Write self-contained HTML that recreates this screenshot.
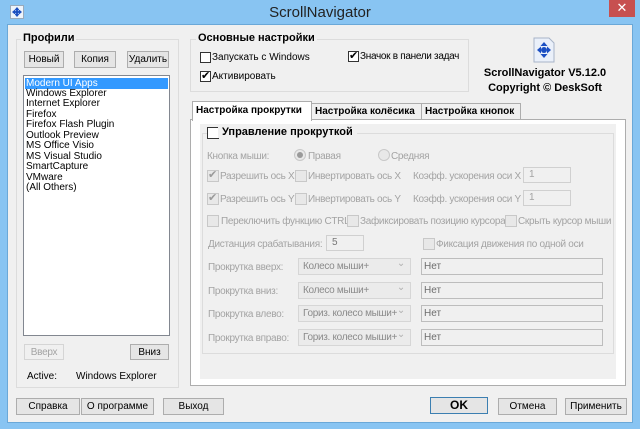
<!DOCTYPE html>
<html><head><meta charset="utf-8"><style>
*{box-sizing:border-box;margin:0;padding:0}
body{width:640px;height:429px;background:#88c4f2;font-family:"Liberation Sans","DejaVu Sans",sans-serif;font-size:10px;color:#000;position:relative;overflow:hidden}
div{white-space:nowrap}
.a{position:absolute}
#client{position:absolute;left:7px;top:24px;width:626px;height:399px;background:#f0f0f0;border:1px solid #6aa8d8}
.grp{position:absolute;border:1px solid #dcdcdc}
.gt{position:absolute;background:#f0f0f0;font-weight:bold;font-size:11px;padding:0 2px}
.btn{position:absolute;border:1px solid #adadad;background:#e5e5e5;text-align:center;font-size:10px;line-height:15px}
.cb{position:absolute;width:11px;height:11px;border:1px solid #333;background:#fff}
.dcb{position:absolute;width:12px;height:12px;border:1px solid #c8c8c8;background:#e8e8e8}
.dis{color:#a3a3a3;letter-spacing:-0.3px}
.inp{position:absolute;border:1px solid #d0d0d0;background:#f0f0f0;color:#a3a3a3;padding-left:5px;line-height:14px}
.cmb{position:absolute;border:1px solid #d6d6d6;background:#ebebeb;color:#8a8a8a;padding-left:4px;line-height:15px;font-size:10px;letter-spacing:-0.3px}
.cmb:after{content:"⌄";position:absolute;right:5px;top:-3px;color:#b0b0b0}
.net{position:absolute;border:1px solid #bdbdbd;background:#f0f0f0;color:#6d6d6d;padding-left:2px;line-height:15px}
.chk:after{content:"✔";position:absolute;left:0px;top:-3px;font-size:11px}
.tab{position:absolute;border:1px solid #adadad;background:#f0f0f0;font-weight:bold;font-size:10px;padding-left:3px;line-height:15px;overflow:hidden}
</style></head><body>
<div class="a" style="left:0;top:4px;width:640px;text-align:center;font-size:15px;color:#222">ScrollNavigator</div>
<svg class="a" style="left:10px;top:5px" width="14" height="14"><rect x="0.5" y="0.5" width="13" height="13" fill="#eef4fb" stroke="#9ab"/><path d="M7 2l2.5 3h-5zM7 12l2.5-3h-5zM2 7l3-2.5v5zM12 7l-3-2.5v5z" fill="#1a4fc0"/><circle cx="7" cy="7" r="2" fill="#1a4fc0"/></svg>
<div class="a" style="left:609px;top:0;width:26px;height:17px;background:#c75050;color:#fff;text-align:center;font-size:13px;line-height:16px">✕</div>
<div id="client"></div>

<div class="grp" style="left:16px;top:39px;width:163px;height:349px"></div>
<div class="gt" style="left:21px;top:32px">Профили</div>
<div class="btn" style="left:24px;top:51px;width:40px;height:17px">Новый</div>
<div class="btn" style="left:74px;top:51px;width:42px;height:17px">Копия</div>
<div class="btn" style="left:127px;top:51px;width:42px;height:17px">Удалить</div>
<div class="a" style="left:23px;top:75px;width:147px;height:261px;background:#fff;border:1px solid #828790"></div>
<div class="a" style="left:25px;top:78px;width:143px;height:10.5px;background:#3399ff"></div>
<div class="a" style="left:26px;top:78.5px;line-height:10.45px;font-size:10px">
<span style="color:#fff">Modern UI Apps</span><br>Windows Explorer<br>Internet Explorer<br>Firefox<br>Firefox Flash Plugin<br>Outlook Preview<br>MS Office Visio<br>MS Visual Studio<br>SmartCapture<br>VMware<br>(All Others)</div>
<div class="btn dis" style="left:24px;top:344px;width:40px;height:16px;background:#f0f0f0;border-color:#d5d5d5">Вверх</div>
<div class="btn" style="left:130px;top:344px;width:39px;height:16px">Вниз</div>
<div class="a" style="left:27px;top:371px">Active:</div>
<div class="a" style="left:76px;top:371px">Windows Explorer</div>

<div class="grp" style="left:190px;top:39px;width:279px;height:53px"></div>
<div class="gt" style="left:196px;top:32px">Основные настройки</div>
<div class="cb" style="left:200px;top:52px"></div><div class="a" style="left:212px;top:52px">Запускать с Windows</div>
<div class="cb chk" style="left:200px;top:71px"></div><div class="a" style="left:212px;top:71px">Активировать</div>
<div class="cb chk" style="left:348px;top:51px"></div><div class="a" style="left:360px;top:51px;letter-spacing:-0.3px">Значок в панели задач</div>

<svg class="a" style="left:533px;top:37px" width="22" height="26"><path d="M1 1h15l5 5v19H1z" fill="#eaf0fa" stroke="#a8b4c8"/><path d="M11 5l3.5 4h-7zM11 21l3.5-4h-7zM4 13l4-3.5v7zM18 13l-4-3.5v7z" fill="#1b4fc3"/><circle cx="11" cy="13" r="3" fill="#1b4fc3"/></svg>
<div class="a" style="left:470px;top:66px;width:150px;text-align:center;font-weight:bold;font-size:11px;line-height:15px">ScrollNavigator V5.12.0<br>Copyright © DeskSoft</div>

<div class="a" style="left:190px;top:119px;width:436px;height:267px;background:#fff;border:1px solid #adadad"></div>
<div class="tab" style="left:311px;top:103px;width:111px;height:17px">Настройка колёсика</div>
<div class="tab" style="left:421px;top:103px;width:100px;height:17px">Настройка кнопок</div>
<div class="tab" style="left:192px;top:101px;width:120px;height:20px;border-bottom:none;background:#fff;line-height:17px">Настройка прокрутки</div>
<div class="a" style="left:200px;top:124px;width:416px;height:255px;background:#f0f0f0"></div>
<div class="grp" style="left:202px;top:133px;width:412px;height:221px;border-color:#dcdcdc"></div>
<div class="cb" style="left:207px;top:127px;width:12px;height:12px"></div>
<div class="a" style="left:218px;top:126px;background:#f0f0f0;font-weight:bold;font-size:11px;padding:0 4px">Управление прокруткой</div>

<div class="a dis" style="left:207px;top:151px">Кнопка мыши:</div>
<div class="a" style="left:294px;top:149px;width:12px;height:12px;border-radius:50%;border:1px solid #c8c8c8;background:#e8e8e8"><div style="margin:2px;width:6px;height:6px;border-radius:50%;background:#9a9a9a"></div></div>
<div class="a dis" style="left:308px;top:151px">Правая</div>
<div class="a" style="left:378px;top:149px;width:12px;height:12px;border-radius:50%;border:1px solid #c8c8c8;background:#e8e8e8"></div>
<div class="a dis" style="left:391px;top:151px">Средняя</div>

<div class="dcb chk" style="left:207px;top:170px;color:#9a9a9a"></div><div class="a dis" style="left:220px;top:171px">Разрешить ось X</div>
<div class="dcb" style="left:295px;top:170px"></div><div class="a dis" style="left:308px;top:171px">Инвертировать ось X</div>
<div class="a dis" style="left:413px;top:171px">Коэфф. ускорения оси X</div>
<div class="inp" style="left:523px;top:167px;width:48px;height:16px">1</div>

<div class="dcb chk" style="left:207px;top:193px;color:#9a9a9a"></div><div class="a dis" style="left:220px;top:194px">Разрешить ось Y</div>
<div class="dcb" style="left:295px;top:193px"></div><div class="a dis" style="left:308px;top:194px">Инвертировать ось Y</div>
<div class="a dis" style="left:413px;top:194px">Коэфф. ускорения оси Y</div>
<div class="inp" style="left:523px;top:190px;width:48px;height:16px">1</div>

<div class="dcb" style="left:207px;top:215px"></div><div class="a dis" style="left:221px;top:216px">Переключить функцию CTRL</div>
<div class="dcb" style="left:347px;top:215px"></div><div class="a dis" style="left:360px;top:216px">Зафиксировать позицию курсора</div>
<div class="dcb" style="left:505px;top:215px"></div><div class="a dis" style="left:518px;top:216px">Скрыть курсор мыши</div>

<div class="a dis" style="left:208px;top:239px">Дистанция срабатывания:</div>
<div class="inp" style="left:326px;top:235px;width:38px;height:16px;color:#777">5</div>
<div class="dcb" style="left:423px;top:238px"></div><div class="a dis" style="left:436px;top:239px">Фиксация движения по одной оси</div>

<div class="a dis" style="left:208px;top:262px">Прокрутка вверх:</div>
<div class="cmb" style="left:298px;top:258px;width:113px;height:17px">Колесо мыши+</div>
<div class="net" style="left:421px;top:258px;width:182px;height:17px">Нет</div>
<div class="a dis" style="left:208px;top:286px">Прокрутка вниз:</div>
<div class="cmb" style="left:298px;top:282px;width:113px;height:17px">Колесо мыши+</div>
<div class="net" style="left:421px;top:282px;width:182px;height:17px">Нет</div>
<div class="a dis" style="left:208px;top:309px">Прокрутка влево:</div>
<div class="cmb" style="left:298px;top:305px;width:113px;height:17px">Гориз. колесо мыши+</div>
<div class="net" style="left:421px;top:305px;width:182px;height:17px">Нет</div>
<div class="a dis" style="left:208px;top:333px">Прокрутка вправо:</div>
<div class="cmb" style="left:298px;top:329px;width:113px;height:17px">Гориз. колесо мыши+</div>
<div class="net" style="left:421px;top:329px;width:182px;height:17px">Нет</div>

<div class="btn" style="left:16px;top:398px;width:64px;height:17px">Справка</div>
<div class="btn" style="left:81px;top:398px;width:73px;height:17px">О программе</div>
<div class="btn" style="left:163px;top:398px;width:61px;height:17px">Выход</div>
<div class="btn" style="left:430px;top:397px;width:58px;height:17px;border:1px solid #3c7fb1;font-weight:bold;font-size:12px">OK</div>
<div class="btn" style="left:498px;top:398px;width:59px;height:17px">Отмена</div>
<div class="btn" style="left:565px;top:398px;width:62px;height:17px">Применить</div>
</body></html>
